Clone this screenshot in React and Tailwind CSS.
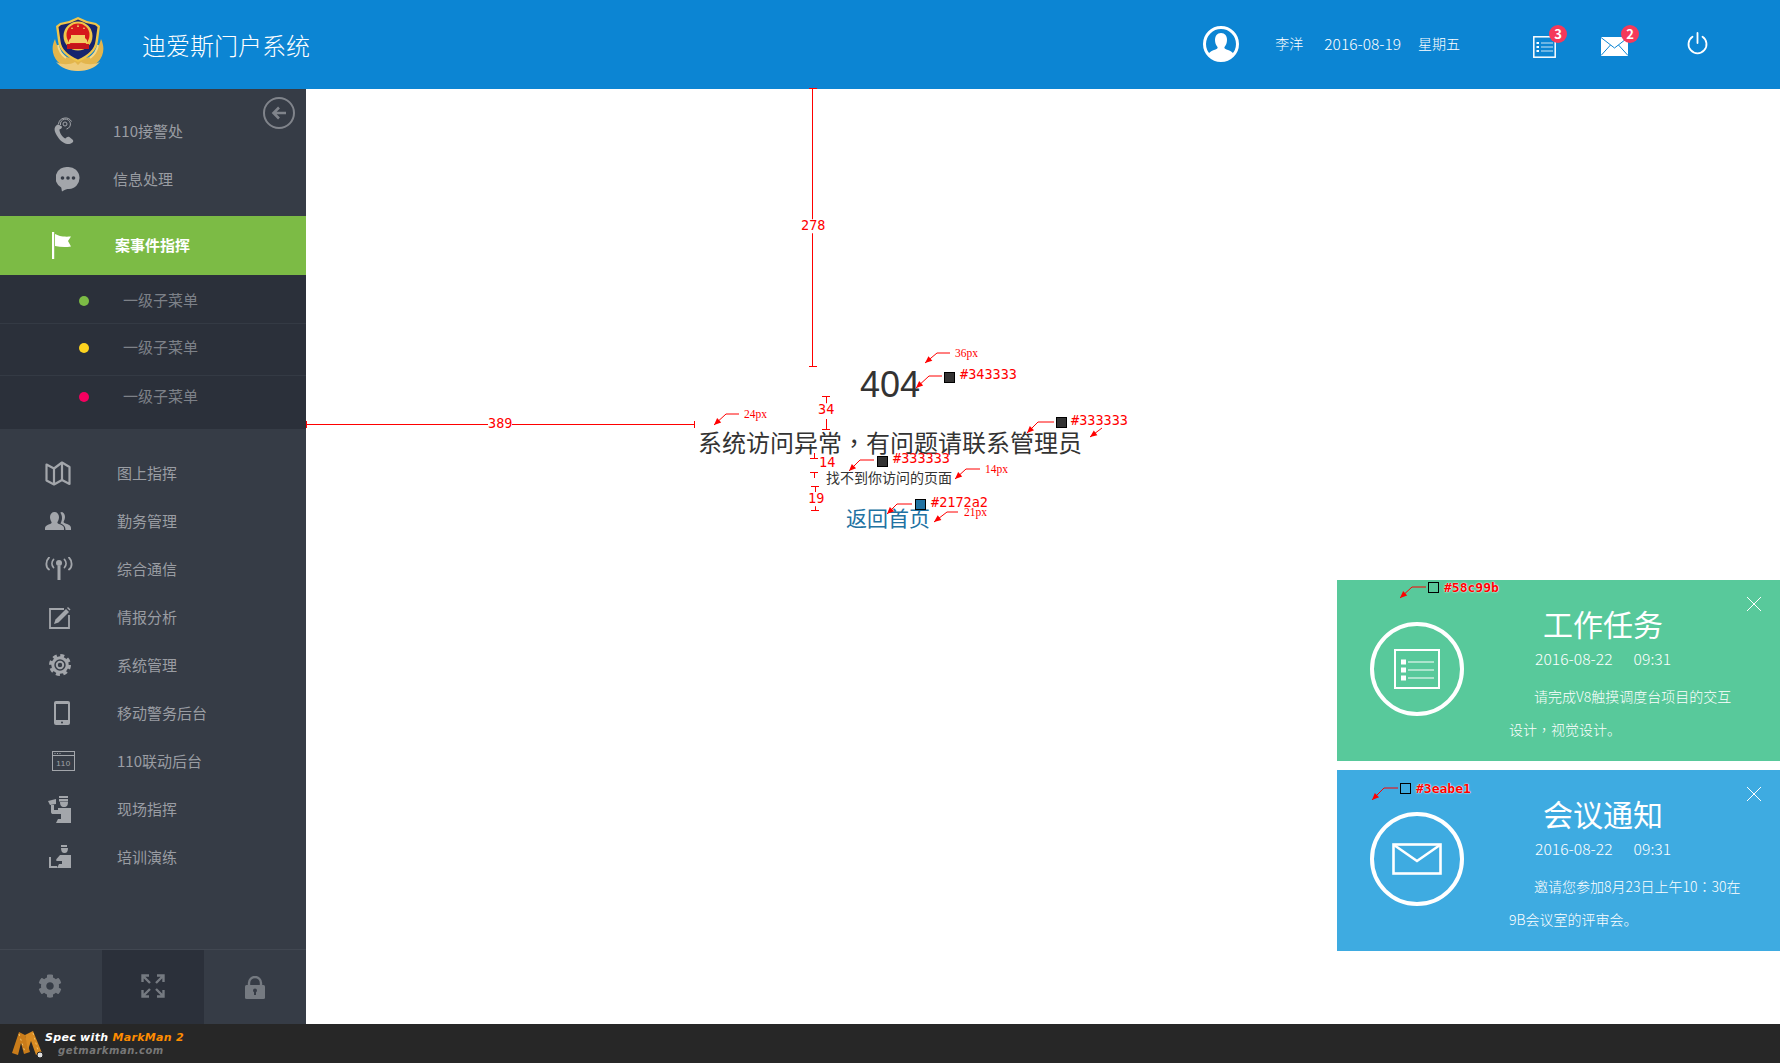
import { FaCog } from 'react-icons/fa';

const cjk = { fontFamily: '"Noto Sans CJK SC", sans-serif' };

// sidebar icons, drawn to match the reference
const PhoneIcon = () => (
  <svg width="22" height="28" viewBox="0 0 22 28" fill="none">
    <path d="M4 8C1 10 1 13 3 17c2 4 6 9 11 10 2 .4 5-.5 6-2 .5-1 .2-2-.6-2.600l-3-2.400c-1-.6-2-.4-3 .6l-1 1c-3-1-6-6-6-9l1.500-.8c1-.6 1.200-1.600.8-2.600L7 8.500C6.500 7.500 5 7.300 4 8z" fill="#a3a6ab" />
    <g stroke="#a3a6ab" strokeWidth="1">
      <circle cx="12" cy="7" r="2" />
      <path d="M7.500 8a5 5 0 1 1 6 4" />
      <path d="M5.500 7a7 7 0 0 1 13-2.500" />
    </g>
  </svg>
);

const ChatIcon = () => (
  <svg width="24" height="26" viewBox="0 0 24 26">
    <path d="M12 1a11 11 0 0 1 1 22c-2 0-4 .2-7 2.500-.4-2-.5-3-.8-4A11 11 0 0 1 12 1z" fill="#a3a6ab" />
    <circle cx="6.500" cy="12" r="1.800" fill="#363c46" />
    <circle cx="12" cy="12" r="1.800" fill="#363c46" />
    <circle cx="17.500" cy="12" r="1.800" fill="#363c46" />
  </svg>
);

const FlagIcon = () => (
  <svg width="20" height="27" viewBox="0 0 20 27" fill="#fff">
    <rect x="0" y="0" width="2.200" height="27" />
    <path d="M3 2c4 2 7 3 16 2.500L16 9l3 5.500c-6 1-11 .5-16-.5z" />
  </svg>
);

const MapIcon = () => (
  <svg width="26" height="25" viewBox="0 0 26 25" fill="none" stroke="#a3a6ab" strokeWidth="2.200" strokeLinejoin="round">
    <path d="M1.500 3.500 9 7.500l8-6 7.500 4.500v17L17 19l-8 4.500-7.500-4z" />
    <path d="M9 7.500v16M17 1.500V19" />
  </svg>
);

const UsersIcon = () => (
  <svg width="26" height="20" viewBox="0 0 26 20" fill="#a3a6ab">
    <path d="M0 19v-2c0-2 2-3 5-4 1-.4 2-1 1.500-2C5.500 9.500 5 7.500 5 6c0-3 2-5 4.500-5S14 3 14 6c0 1.500-.5 3.500-1.500 5-.5 1 .5 1.600 1.500 2 3 1 5 2 5 4v2z" />
    <path d="M16 1c2.500 0 4 2 4 5 0 1.500-.5 3-1.300 4.500-.4.800.3 1.300 1.300 1.800 3 1.200 6 2 6 4.700v2h-5.500c0-3-1-5-5-6.500 1-2 1.500-4 1.500-5.500 0-2-.5-4-1.800-5.300.6-.4 1.300-.7 1.800-.7z" />
  </svg>
);

const AntennaIcon = () => (
  <svg width="28" height="24" viewBox="0 0 28 24" fill="none" stroke="#a3a6ab" strokeWidth="1.800" strokeLinecap="round">
    <circle cx="14" cy="6" r="3" fill="#a3a6ab" stroke="none" />
    <path d="M14 9v14" strokeWidth="3" strokeLinecap="butt" />
    <path d="M8.500 2.500c-2 2.300-2 5.700 0 8M19.500 2.500c2 2.300 2 5.700 0 8" />
    <path d="M4 .5c-3.500 3.500-3.500 9.500 0 12M24 .5c3.500 3.500 3.500 9.500 0 12" />
  </svg>
);

const EditIcon = () => (
  <svg width="22" height="23" viewBox="0 0 22 23" fill="none">
    <path d="M15 3H1v19h19V9" stroke="#a3a6ab" strokeWidth="1.800" />
    <path d="M5 18l1.500-4.500L17 3l3 3-10.500 10.500z" fill="#a3a6ab" />
    <path d="M18 2l1-1 2.500 2.500-1 1z" fill="#a3a6ab" />
  </svg>
);

const GearRingIcon = () => (
  <svg width="22" height="22" viewBox="0 0 22 22" fill="none" stroke="#a3a6ab">
    <circle cx="11" cy="11" r="9.500" strokeWidth="3" strokeDasharray="4 3.460" />
    <circle cx="11" cy="11" r="7.200" strokeWidth="3" />
    <circle cx="11" cy="11" r="3.200" strokeWidth="2" />
  </svg>
);

const TabletIcon = () => (
  <svg width="16" height="24" viewBox="0 0 16 24">
    <rect x="0" y="0" width="16" height="24" rx="2" fill="#a3a6ab" />
    <rect x="2" y="3" width="12" height="16" fill="#363c46" />
    <circle cx="8" cy="21.500" r="1" fill="#363c46" />
  </svg>
);

const BoxIcon = () => (
  <svg width="23" height="20" viewBox="0 0 23 20" fill="none">
    <rect x=".5" y=".5" width="22" height="19" stroke="#a3a6ab" />
    <path d="M1 4.500h21" stroke="#a3a6ab" />
    <path d="M2.500 2.500h1M5 2.500h1M7.500 2.500h1" stroke="#a3a6ab" />
    <text x="11.500" y="15" textAnchor="middle" fontSize="8" fill="#a3a6ab" fontFamily="Liberation Sans, sans-serif" letterSpacing=".5">110</text>
  </svg>
);

const OfficerIcon = () => (
  <svg width="24" height="27" viewBox="0 0 24 27" fill="#a3a6ab">
    <rect x="11" y="0" width="9" height="2" />
    <rect x="11" y="3" width="9" height="2.500" />
    <path d="M12 6h8c0 3-1 5-4 5s-4-2-4-5z" />
    <path d="M0 5l8-2v5L2 9z" />
    <path d="M3 9h3v5h4v-2h13v15H8l2-4h3v-5H5c-1 0-2-.5-2-2z" />
  </svg>
);

const TrainIcon = () => (
  <svg width="25" height="24" viewBox="0 0 25 24" fill="#a3a6ab">
    <rect x="13" y="0" width="6" height="2" />
    <path d="M13 3h7c0 3-1 5-3.500 5S13 6 13 3z" />
    <path d="M12 10h11v13H9l2-4h3v-3H9c-1 0-1-1-.5-2z" />
    <path d="M1 12h2v9h6v2H1z" />
  </svg>
);

const ExpandIcon = () => (
  <svg width="24" height="24" viewBox="0 0 24 24" fill="none" stroke="#757a81" strokeWidth="2.400">
    <path d="M1.500 8V1.500H8M1.500 1.500 9 9" />
    <path d="M22.500 8V1.500H16M22.500 1.500 15 9" />
    <path d="M1.500 16v6.500H8M1.500 22.500 9 15" />
    <path d="M22.500 16v6.500H16M22.500 22.500 15 15" />
  </svg>
);

const LockIcon = () => (
  <svg width="20" height="23" viewBox="0 0 20 23">
    <path d="M4 10V7a6 6 0 0 1 12 0v3" fill="none" stroke="#757a81" strokeWidth="2.400" />
    <rect x="0" y="9" width="20" height="14" rx="1.500" fill="#757a81" />
    <circle cx="10" cy="14.500" r="2" fill="#363c46" />
    <rect x="9" y="15" width="2" height="4" fill="#363c46" />
  </svg>
);

const Emblem = () => (
  <svg width="52" height="55" viewBox="0 0 52 55">
    {/* wheat wreath */}
    <path d="M3 22c-4 8-3 17 3 23 5 5 12 8 20 9 8-1 15-4 20-9 6-6 7-15 3-23-2 8-6 14-12 18l-11 3-11-3C9 36 5 30 3 22z" fill="#e3b54c" />
    <path d="M4 45c6 3 14 3 19 0l3 3 3-3c5 3 13 3 19 0-5 6-13 9-22 9S9 51 4 45z" fill="#eecb7a" />
    <path d="M6 28c1 6 4 10 8 13M46 28c-1 6-4 10-8 13" stroke="#f4d98d" strokeWidth="2" fill="none" />
    {/* shield */}
    <path d="M26 0l9 4 9 2 4 3-2 15c-1 9-8 16-20 21C14 40 7 33 6 24L4 9l4-3 9-2z" fill="#efc54a" />
    <path d="M26 2.500l8 3.500 9 2 2.500 2-2 14c-1 8-7 14-17.500 18.500C15.500 38 9.500 32 8.500 24l-2-14L9 8l9-2z" fill="#16246e" />
    <circle cx="26" cy="19" r="14.500" fill="#efc54a" />
    <circle cx="26" cy="18" r="11.500" fill="#d6181c" />
    <path d="M17 26h18v-3l-2-2v-3H19v3l-2 2z" fill="#f3d068" />
    <rect x="15" y="27" width="22" height="5" fill="#c4161b" />
    <path d="M26 7l1 3h-2zM20 10l1 2h-2zM32 10l1 2h-2z" fill="#f3d068" />
  </svg>
);

const AvatarIcon = () => (
  <svg width="36" height="36" viewBox="0 0 36 36">
    <circle cx="18" cy="18" r="16.500" fill="none" stroke="#fff" strokeWidth="3" />
    <path d="M18 7c4 0 6 3 6 7 0 3-1 5-2.500 7-.5 1 .5 2 2 2.500 3 1 6 2 7 4.500-3 4-7.500 6-12.500 6S8.500 32 5.500 28c1-2.500 4-3.500 7-4.500 1.500-.5 2.500-1.500 2-2.500C13 19 12 17 12 14c0-4 2-7 6-7z" fill="#fff" />
  </svg>
);

const HeaderListIcon = () => (
  <svg width="23" height="22" viewBox="0 0 23 22" fill="none" stroke="#fff">
    <rect x=".8" y=".8" width="21.400" height="20.400" strokeWidth="1.500" />
    <path d="M8 7h12M8 11h12M8 15h12" strokeWidth=".8" />
    <path d="M3.500 7h2.500M3.500 11h2.500M3.500 15h2.500" strokeWidth="1.800" />
  </svg>
);

const CardListIcon = () => (
  <svg width="46" height="40" viewBox="0 0 46 40" fill="none" stroke="#fff">
    <rect x="1" y="1" width="44" height="38" strokeWidth="2" />
    <path d="M14 13h26M14 21h26M14 29h26" strokeWidth="1.200" />
    <path d="M7 13h5M7 21h5M7 29h5" strokeWidth="5" />
  </svg>
);

const MailIcon = () => (
  <svg width="27" height="19" viewBox="0 0 27 19">
    <rect x="0" y="0" width="27" height="19" fill="#fff" />
    <path d="M0 .5 13.500 11 27 .5M0 18.500l9.500-10.500M27 18.500 17.500 8" fill="none" stroke="#0c85d3" strokeWidth="1" />
  </svg>
);

const PowerIcon = () => (
  <svg width="21" height="23" viewBox="0 0 21 23" fill="none" stroke="#fff" strokeWidth="1.800" strokeLinecap="round">
    <path d="M10.500 1v10" />
    <path d="M5.500 4.800a9 9 0 1 0 10 0" />
  </svg>
);

const Badge = ({ n, className }) => (
  <span className={`absolute w-[18px] h-[18px] rounded-full bg-[#f5395a] text-white text-[13px] font-bold leading-[18px] text-center ${className}`}>{n}</span>
);

const topMenu = [
  { label: '110接警处', icon: <PhoneIcon />, shift: 'pl-[14px]' },
  { label: '信息处理', icon: <ChatIcon />, shift: 'pl-[22px]' },
];

const subMenu = [
  { label: '一级子菜单', dot: 'bg-[#7cbb45]', row: 'h-[49px] pt-[3px] border-b border-[#343a44]' },
  { label: '一级子菜单', dot: 'bg-[#fdd31f]', row: 'h-[52px] pb-[4px] border-b border-[#343a44]' },
  { label: '一级子菜单', dot: 'bg-[#f5005f]', row: 'h-[53px] pb-[12px]' },
];

const mainMenu = [
  { label: '图上指挥', icon: <MapIcon />, shift: 'pr-[1px]' },
  { label: '勤务管理', icon: <UsersIcon />, shift: 'pr-[1px]' },
  { label: '综合通信', icon: <AntennaIcon />, shift: '' },
  { label: '情报分析', icon: <EditIcon />, shift: 'pl-[2px]' },
  { label: '系统管理', icon: <GearRingIcon />, shift: 'pl-[2px]' },
  { label: '移动警务后台', icon: <TabletIcon />, shift: 'pl-[6px]' },
  { label: '110联动后台', icon: <BoxIcon />, shift: 'pl-[10px]' },
  { label: '现场指挥', icon: <OfficerIcon />, shift: 'pl-[3px]' },
  { label: '培训演练', icon: <TrainIcon />, shift: 'pl-[4px]' },
];

const Sidebar = () => (
  <aside className="relative w-[306px] shrink-0 bg-[#363c46] flex flex-col" style={cjk}>
    <button className="absolute top-[8px] left-[263px] w-8 h-8 rounded-full border-[2.500px] border-[#80848b] flex items-center justify-center">
      <svg width="16" height="14" viewBox="0 0 16 14" fill="none" stroke="#80848b" strokeWidth="2.600">
        <path d="M15 7H3M8 1.500 2.500 7 8 12.500" />
      </svg>
    </button>

    {/* top group */}
    <div className="pt-[18px] pb-[13px]">
      {topMenu.map((item) => (
        <div key={item.label} className="h-12 flex items-center text-[15px] text-[#9a9da3]">
          <div className={`w-[113px] flex justify-center ${item.shift}`}>{item.icon}</div>
          <span>{item.label}</span>
        </div>
      ))}
    </div>

    {/* active item */}
    <div className="h-[59px] bg-[#7cbb45] flex items-center text-white font-bold text-[15px]">
      <div className="w-[115px] pl-[8px] flex justify-center"><FlagIcon /></div>
      <span>案事件指挥</span>
    </div>

    {/* sub menu */}
    <div className="bg-[#2b303a] h-[154px]">
      {subMenu.map((item, i) => (
        <div key={i} className={`flex items-center text-[15px] text-[#7d8188] ${item.row}`}>
          <span className={`ml-[79px] w-[10px] h-[10px] rounded-full ${item.dot}`}></span>
          <span className="ml-[34px]">{item.label}</span>
        </div>
      ))}
    </div>

    {/* main menu */}
    <div className="pt-5 flex-1">
      {mainMenu.map((item) => (
        <div key={item.label} className="h-12 flex items-center text-[15px] text-[#9a9da3]">
          <div className={`w-[117px] flex justify-center ${item.shift}`}>{item.icon}</div>
          <span>{item.label}</span>
        </div>
      ))}
    </div>

    {/* bottom toolbar */}
    <div className="h-[75px] border-t border-[#414751] grid grid-cols-3">
      <div className="flex items-center justify-center pb-[3px] pr-[2px]"><FaCog className="text-[24px] text-[#757a81]" /></div>
      <div className="bg-[#2b303a] flex items-center justify-center pb-[3px]"><ExpandIcon /></div>
      <div className="flex items-center justify-center"><LockIcon /></div>
    </div>
  </aside>
);

const Header = () => (
  <header className="h-[89px] shrink-0 bg-[#0c85d3] flex items-center text-white" style={cjk}>
    <div className="ml-[52px] w-[90px]"><Emblem /></div>
    <div className="text-[24px] font-light">迪爱斯门户系统</div>
    <div className="ml-auto flex items-center">
      <span className="block -mt-[2px]"><AvatarIcon /></span>
      <span className="ml-[36px] text-[14px] font-light pb-[2px]">李洋</span>
      <span className="ml-[21px] text-[15.500px] font-light pb-[2px]">2016-08-19</span>
      <span className="ml-[17px] text-[14px] font-light pb-[2px]">星期五</span>
      <span className="relative ml-[73px] mt-[4px] block"><HeaderListIcon /><Badge n="3" className="-top-[11px] left-[16px]" /></span>
      <span className="relative ml-[45px] mt-[4px] block"><MailIcon /><Badge n="2" className="-top-[12px] left-[20px]" /></span>
      <span className="ml-[59px] mr-[72px] -mt-[2px] block"><PowerIcon /></span>
    </div>
  </header>
);

const NoticeCard = ({ title, icon, line1, line2, bg }) => (
  <div className={`relative h-[181px] flex ${bg} text-white`} style={cjk}>
    <div className="w-[172px] pl-[33px] pt-[42px]">
      <div className="w-[94px] h-[94px] rounded-full border-4 border-white flex items-center justify-center">{icon}</div>
    </div>
    <div className="flex-1">
      <div className="pl-[34px] pt-[20px] text-[30px] leading-[46px]">{title}</div>
      <div className="pl-[26px] mt-[2px] text-[15.700px] leading-[22px] font-light">
        2016-08-22<span className="ml-[21px]">09:31</span>
      </div>
      <div className="text-[14px] leading-[33px] font-light mt-[10px]">
        <div className="pl-[25px]">{line1}</div>
        <div>{line2}</div>
      </div>
    </div>
    <svg className="absolute top-[16px] right-[18px]" width="16" height="16" viewBox="0 0 16 16" stroke="#fff" strokeWidth="1">
      <path d="M1 1l14 14M15 1 1 15" />
    </svg>
  </div>
);

// centred full-width comma, as in the reference
const Comma = ({ children = '，' }) => <span className="font-['Noto_Sans_CJK_TC',sans-serif]">{children}</span>;

// red measuring marks that the spec tool left on the picture
const marks = [
  [[950, 353], [937, 353], [925, 363]],
  [[942, 376], [929, 376], [916, 388]],
  [[739, 414], [726, 414], [714, 425]],
  [[1054, 422], [1038, 422], [1027, 433]],
  [[1102, 428], [1090, 437]],
  [[874, 460], [860, 460], [849, 471]],
  [[980, 469], [966, 469], [955, 479]],
  [[958, 512], [947, 512], [934, 522]],
  [[912, 504], [897, 504], [887, 514]],
  [[1426, 587], [1412, 587], [1400, 598]],
  [[1398, 788], [1384, 788], [1372, 800]],
];

const rules = [
  'M812.500 89V366M808.500 366H816.500M808.500 88H816.500',
  'M306 424.500H695M306.500 421V428M694.500 421V428',
  'M822 396H830M826 396V404M826 419V429M822 429H830',
  'M810 458H818M814 453V458M810 472H818M814 472V478',
  'M811 486H819M815 486V492M811 510H819M815 503V510',
];

const swatches = [
  { x: 944, y: 372, c: '#343333' },
  { x: 1056, y: 417, c: '#333333' },
  { x: 877, y: 456, c: '#333333' },
  { x: 915, y: 499, c: '#2172a2' },
  { x: 1428, y: 582, c: '#58c99b' },
  { x: 1400, y: 783, c: '#3eabe1' },
];

// arrow head at the end of a mark, pointing along its last segment
const arrowHead = (pts) => {
  const [qx, qy] = pts[pts.length - 2];
  const [px, py] = pts[pts.length - 1];
  const len = Math.hypot(px - qx, py - qy);
  const ux = (px - qx) / len;
  const uy = (py - qy) / len;
  const bx = px - ux * 7;
  const by = py - uy * 7;
  return `${px},${py} ${bx - uy * 3},${by + ux * 3} ${bx + uy * 3},${by - ux * 3}`;
};

const Overlay = () => (
  <svg className="absolute inset-0 pointer-events-none" width="1780" height="1063" fill="none">
    {rules.map((d, i) => <path key={i} d={d} stroke="#f00" strokeWidth="1" shapeRendering="crispEdges" />)}
    {marks.map((pts, i) => (
      <g key={i}>
        <polyline points={pts.map((p) => p.join(',')).join(' ')} stroke="#f00" strokeWidth="1" />
        <polygon points={arrowHead(pts)} fill="#f00" />
      </g>
    ))}
    {swatches.map((s) => <rect key={s.x} x={s.x + 0.5} y={s.y + 0.5} width="10" height="10" fill={s.c} stroke="#000" />)}
  </svg>
);

const Label = ({ x, y, children, kind = 'mono' }) => {
  const cls = {
    mono: 'font-["DejaVu_Sans_Mono",monospace] text-[13.500px] text-[#f00]',
    px: 'font-["Liberation_Serif",serif] text-[11.500px] text-[#f00]',
    num: 'font-["DejaVu_Sans_Mono",monospace] text-[13.500px] text-[#f00] bg-white',
    tag: 'font-["DejaVu_Sans_Mono",monospace] text-[13px] font-bold text-[#f00] [text-shadow:0_0_1px_#fff,0_0_2px_#fff]',
  }[kind];
  return (
    <span className={`absolute -translate-y-1/2 leading-none whitespace-nowrap ${cls}`} style={{ left: x, top: y }}>{children}</span>
  );
};

const App = () => (
  <div className="relative w-[1780px] h-[1063px] overflow-hidden flex flex-col bg-white">
    <Header />
    <div className="flex-1 flex min-h-0">
      <Sidebar />
      <main className="relative flex-1 bg-white pl-[389px] pt-[278px]" style={cjk}>
        <div className="w-[390px] text-center">
          <div className="text-[36px] leading-[36px] text-[#343333] font-['Liberation_Sans',sans-serif]">404</div>
          <div className="mt-[24px] text-[24px] leading-[30px] text-[#333333]">系统访问异常<Comma />有问题请联系管理员</div>
          <div className="mt-[13px] text-[14px] leading-[14px] text-[#333333] pr-[2px]">找不到你访问的页面</div>
          <a className="block mt-[23px] text-[21px] leading-[21px] text-[#2172a2] pr-[4px]">返回首页</a>
        </div>
        <div className="absolute right-0 top-[491px] w-[443px] flex flex-col gap-[9px]">
          <NoticeCard
            title="工作任务"
            bg="bg-[#58c99b]"
            icon={<CardListIcon />}
            line1="请完成V8触摸调度台项目的交互"
            line2={<>设计<Comma />视觉设计。</>}
          />
          <NoticeCard
            title="会议通知"
            bg="bg-[#3eabe1]"
            icon={
              <svg width="50" height="32" viewBox="0 0 50 32" fill="none" stroke="#fff" strokeWidth="2.600">
                <rect x="1.500" y="1.500" width="47" height="29" />
                <path d="M2 2l23 16L48 2" />
              </svg>
            }
            line1={<>邀请您参加8月23日上午10<Comma>：</Comma>30在</>}
            line2="9B会议室的评审会。"
          />
        </div>
      </main>
    </div>

    {/* spec tool strip */}
    <footer className="h-[39px] shrink-0 bg-[#272727] flex items-center">
      <svg className="ml-[11px]" width="34" height="28" viewBox="0 0 34 28">
        <path d="M1 23 8 2l6 3 5 17-6 2-3-11-3 12z" fill="#c97c1a" />
        <path d="M14 5l8-4 9 22-6 2-5-14-3 9z" fill="#d98b22" />
        <path d="M8 4l6 18M22 3l6 21" stroke="#f0c36a" strokeWidth="1" strokeDasharray="2 3" fill="none" />
        <circle cx="29" cy="25" r="3" fill="#ddd" stroke="#222" />
      </svg>
      <div className="font-['DejaVu_Sans',sans-serif] italic font-bold leading-none">
        <div className="text-[11px] text-white tracking-[.3px]">Spec with <span className="text-[#ff8c00]">MarkMan 2</span></div>
        <div className="mt-[3px] ml-[13px] text-[10px] text-[#777] tracking-[.5px]">getmarkman.com</div>
      </div>
    </footer>

    <Overlay />
    <Label x={801} y={226} kind="num">278</Label>
    <Label x={488} y={424} kind="num">389</Label>
    <Label x={818} y={410} kind="num">34</Label>
    <Label x={819} y={463} kind="num">14</Label>
    <Label x={808} y={499} kind="num">19</Label>
    <Label x={955} y={354} kind="px">36px</Label>
    <Label x={744} y={415} kind="px">24px</Label>
    <Label x={985} y={470} kind="px">14px</Label>
    <Label x={964} y={513} kind="px">21px</Label>
    <Label x={960} y={375}>#343333</Label>
    <Label x={1071} y={421}>#333333</Label>
    <Label x={893} y={459}>#333333</Label>
    <Label x={931} y={503}>#2172a2</Label>
    <Label x={1444} y={587} kind="tag">#58c99b</Label>
    <Label x={1416} y={788} kind="tag">#3eabe1</Label>
  </div>
);

export default App;
